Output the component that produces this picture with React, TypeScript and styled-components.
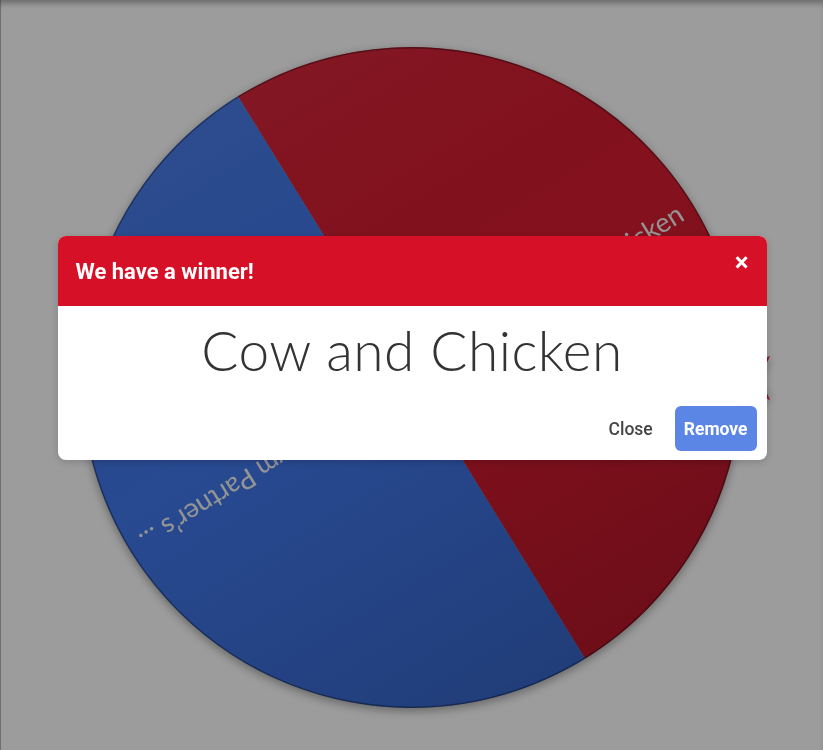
import styled, { createGlobalStyle } from 'styled-components';

// Spinner page with the winner dialog open over it.

const WHEEL_SIZE = 661;
const R = WHEEL_SIZE / 2;
// boundary between the two slices, in degrees (screen coords, clockwise from +x)
const SPLIT = 58.3;

type Slice = { label: string; color: string };

const SLICES: Slice[] = [
  { label: 'Cow and Chicken', color: '#d81c31' },
  { label: 'My Gym Partner\u2019s ...', color: '#4279ee' },
];

const GlobalStyle = createGlobalStyle`
  html, body {
    margin: 0;
    padding: 0;
    background: #ffffff;
    font-family: Roboto, "Liberation Sans", Arial, sans-serif;
  }
`;

const Stage = styled.main`
  min-height: 100vh;
  display: flex;
  justify-content: center;
  align-items: flex-start;
  padding-top: 47px;
  box-sizing: border-box;
`;

const WheelWrap = styled.div`
  position: relative;
  width: ${WHEEL_SIZE}px;
  height: ${WHEEL_SIZE}px;
  filter: drop-shadow(0 3px 5px rgba(0, 0, 0, 0.35));
`;

const Pointer = styled.svg`
  position: absolute;
  left: 637px;
  top: 309px;
  width: 52px;
  height: 44px;
`;

const Backdrop = styled.div`
  position: fixed;
  inset: 0;
  background: rgba(0, 0, 0, 0.39);
  box-shadow:
    inset 1px 0 0 rgba(0, 0, 0, 0.25),
    inset 0 6px 6px -3px rgba(0, 0, 0, 0.35);
  display: flex;
  justify-content: center;
  align-items: flex-start;
  padding-top: 236px;
`;

const Dialog = styled.section`
  width: 709px;
  margin-left: 1px;
  background: #ffffff;
  border-radius: 8px;
  overflow: hidden;
  box-shadow: 0 2px 8px rgba(0, 0, 0, 0.18);
`;

const DialogHeader = styled.header`
  height: 70px;
  box-sizing: border-box;
  background: #d51027;
  display: flex;
  justify-content: space-between;
  align-items: center;
  padding: 0 18px;
`;

const Title = styled.h5`
  margin: 0;
  color: #ffffff;
  font-size: 22px;
  font-weight: 700;
`;

const CloseX = styled.button`
  align-self: flex-start;
  margin-top: 13px;
  padding: 0;
  border: 0;
  background: none;
  color: #ffffff;
  font-family: Roboto, "Liberation Sans", Arial, sans-serif;
  font-size: 26px;
  font-weight: 700;
  line-height: 26px;
  cursor: pointer;
`;

const DialogBody = styled.div`
  padding: 10px 16px 22px;
  text-align: center;
`;

const WinnerName = styled.div`
  color: #333333;
  font-family: Lato, "Noto Sans", sans-serif;
  font-weight: 300;
  font-size: 55px;
  line-height: 68px;
  letter-spacing: 0.5px;
`;

const DialogFooter = styled.footer`
  display: flex;
  justify-content: flex-end;
  align-items: center;
  gap: 6px;
  padding: 0 10px 9px;
`;

const FooterButton = styled.button<{ $primary?: boolean }>`
  height: 45px;
  padding: 0 ${({ $primary }) => ($primary ? '9px' : '16px')};
  border: 0;
  border-radius: 6px;
  background: ${({ $primary }) => ($primary ? '#5b86e5' : 'transparent')};
  color: ${({ $primary }) => ($primary ? '#ffffff' : '#444444')};
  font-family: Roboto, "Liberation Sans", Arial, sans-serif;
  font-size: 17.5px;
  font-weight: ${({ $primary }) => ($primary ? 700 : 500)};
  cursor: pointer;
`;

function polar(angleDeg: number, radius: number): [number, number] {
  const a = (angleDeg * Math.PI) / 180;
  return [R + radius * Math.cos(a), R + radius * Math.sin(a)];
}

function slicePath(from: number, to: number): string {
  const [x1, y1] = polar(from, R);
  const [x2, y2] = polar(to, R);
  const large = to - from > 180 ? 1 : 0;
  return `M ${R} ${R} L ${x1} ${y1} A ${R} ${R} 0 ${large} 1 ${x2} ${y2} Z`;
}

function Wheel(): JSX.Element {
  const step = 360 / SLICES.length;
  return (
    <svg width={WHEEL_SIZE} height={WHEEL_SIZE} viewBox={`0 0 ${WHEEL_SIZE} ${WHEEL_SIZE}`}>
      <defs>
        <linearGradient id="wheel-light" x1="0" y1="0" x2="0.6" y2="1">
          <stop offset="0" stopColor="#ffffff" stopOpacity="0.1" />
          <stop offset="0.55" stopColor="#000000" stopOpacity="0" />
          <stop offset="1" stopColor="#000000" stopOpacity="0.16" />
        </linearGradient>
      </defs>
      {SLICES.map((s, i) => {
        const from = SPLIT - 180 + i * step;
        return <path key={s.label} d={slicePath(from, from + step)} fill={s.color} />;
      })}
      <circle cx={R} cy={R} r={R} fill="url(#wheel-light)" />
      {SLICES.map((s, i) => {
        const mid = SPLIT - 180 + i * step + step / 2;
        return (
          <text
            key={`t-${s.label}`}
            x={R + R - 14}
            y={R}
            dy="0.35em"
            textAnchor="end"
            fill="#f2f2f2"
            fontFamily='Lato, "Noto Sans", sans-serif'
            fontSize={27}
            transform={`rotate(${mid} ${R} ${R})`}
          >
            {s.label}
          </text>
        );
      })}
      <circle cx={R} cy={R} r={R - 0.75} fill="none" stroke="rgba(0,0,0,0.35)" strokeWidth={1.5} />
    </svg>
  );
}

export default function App(): JSX.Element {
  return (
    <>
      <GlobalStyle />
      <Stage>
        <WheelWrap>
          <Wheel />
          <Pointer viewBox="0 0 52 44">
            <path d="M0 22 L52 0 L42 22 L52 44 Z" fill="#e01f34" />
          </Pointer>
        </WheelWrap>
      </Stage>
      <Backdrop>
        <Dialog role="dialog" aria-label="winner">
          <DialogHeader>
            <Title>We have a winner!</Title>
            <CloseX aria-label="close">×</CloseX>
          </DialogHeader>
          <DialogBody>
            <WinnerName>Cow and Chicken</WinnerName>
          </DialogBody>
          <DialogFooter>
            <FooterButton>Close</FooterButton>
            <FooterButton $primary>Remove</FooterButton>
          </DialogFooter>
        </Dialog>
      </Backdrop>
    </>
  );
}
